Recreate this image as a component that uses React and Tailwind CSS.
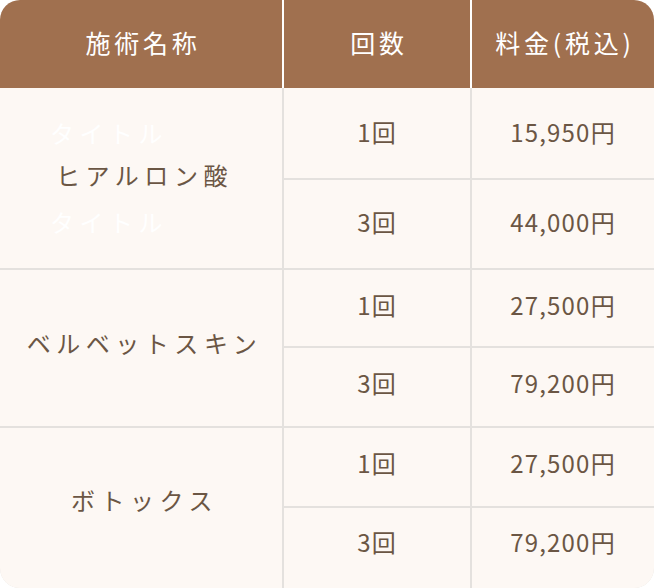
export default function App() {
  const font = { fontFamily: '"Noto Sans CJK JP", "Noto Sans", sans-serif' };
  const num = "flex items-center justify-center bg-[#fdf8f4] text-[24px] tracking-[0.05em] text-[#6b5644]";
  const name = "flex items-center justify-center pl-[7px] bg-[#fdf8f4] text-[24px] tracking-[0.23em] text-[#6b5644]";
  const head = "bg-[#a0704f] flex items-center justify-center pb-[2px] pl-[4px] text-white text-[25px] tracking-[0.15em]";
  return (
    <div className="w-[654px] h-[588px] bg-white" style={font}>
      <div className="w-[654px] h-[588px] rounded-[20px] overflow-hidden flex flex-col">
        <div className="grid grid-cols-[282px_186px_182px] gap-x-[2px] bg-white h-[88px]">
          <div className={head}>施術名称</div>
          <div className={head}>回数</div>
          <div className={head}>料金(税込)</div>
        </div>
        <div className="grid grid-cols-[282px_186px_182px] grid-rows-[90px_88px_76px_78px_78px_80px] gap-[2px] bg-[#e4e1de] leading-none">
          <div className={name + " row-span-2"}>
            <div className="flex flex-col items-start">
              <div className="h-[45px] flex items-center text-white -ml-[6px]">タイトル</div>
              <div className="h-[45px] flex items-center pb-[6px]">ヒアルロン酸</div>
              <div className="h-[45px] flex items-center text-white -ml-[6px] pb-[2px]">タイトル</div>
            </div>
          </div>
          <div className={num + " pb-[2px]"}>1回</div>
          <div className={num + " pb-[2px]"}>15,950円</div>
          <div className={num + " pb-[4px]"}>3回</div>
          <div className={num + " pb-[4px]"}>44,000円</div>

          <div className={name + " row-span-2 pb-[10px]"}>ベルベットスキン</div>
          <div className={num + " pb-[6px]"}>1回</div>
          <div className={num + " pb-[6px]"}>27,500円</div>
          <div className={num + " pb-[8px]"}>3回</div>
          <div className={num + " pb-[8px]"}>79,200円</div>

          <div className={name + " row-span-2 pb-[16px]"}>ボトックス</div>
          <div className={num + " pb-[8px]"}>1回</div>
          <div className={num + " pb-[8px]"}>27,500円</div>
          <div className={num + " pb-[12px]"}>3回</div>
          <div className={num + " pb-[12px]"}>79,200円</div>
        </div>
      </div>
    </div>
  );
}
